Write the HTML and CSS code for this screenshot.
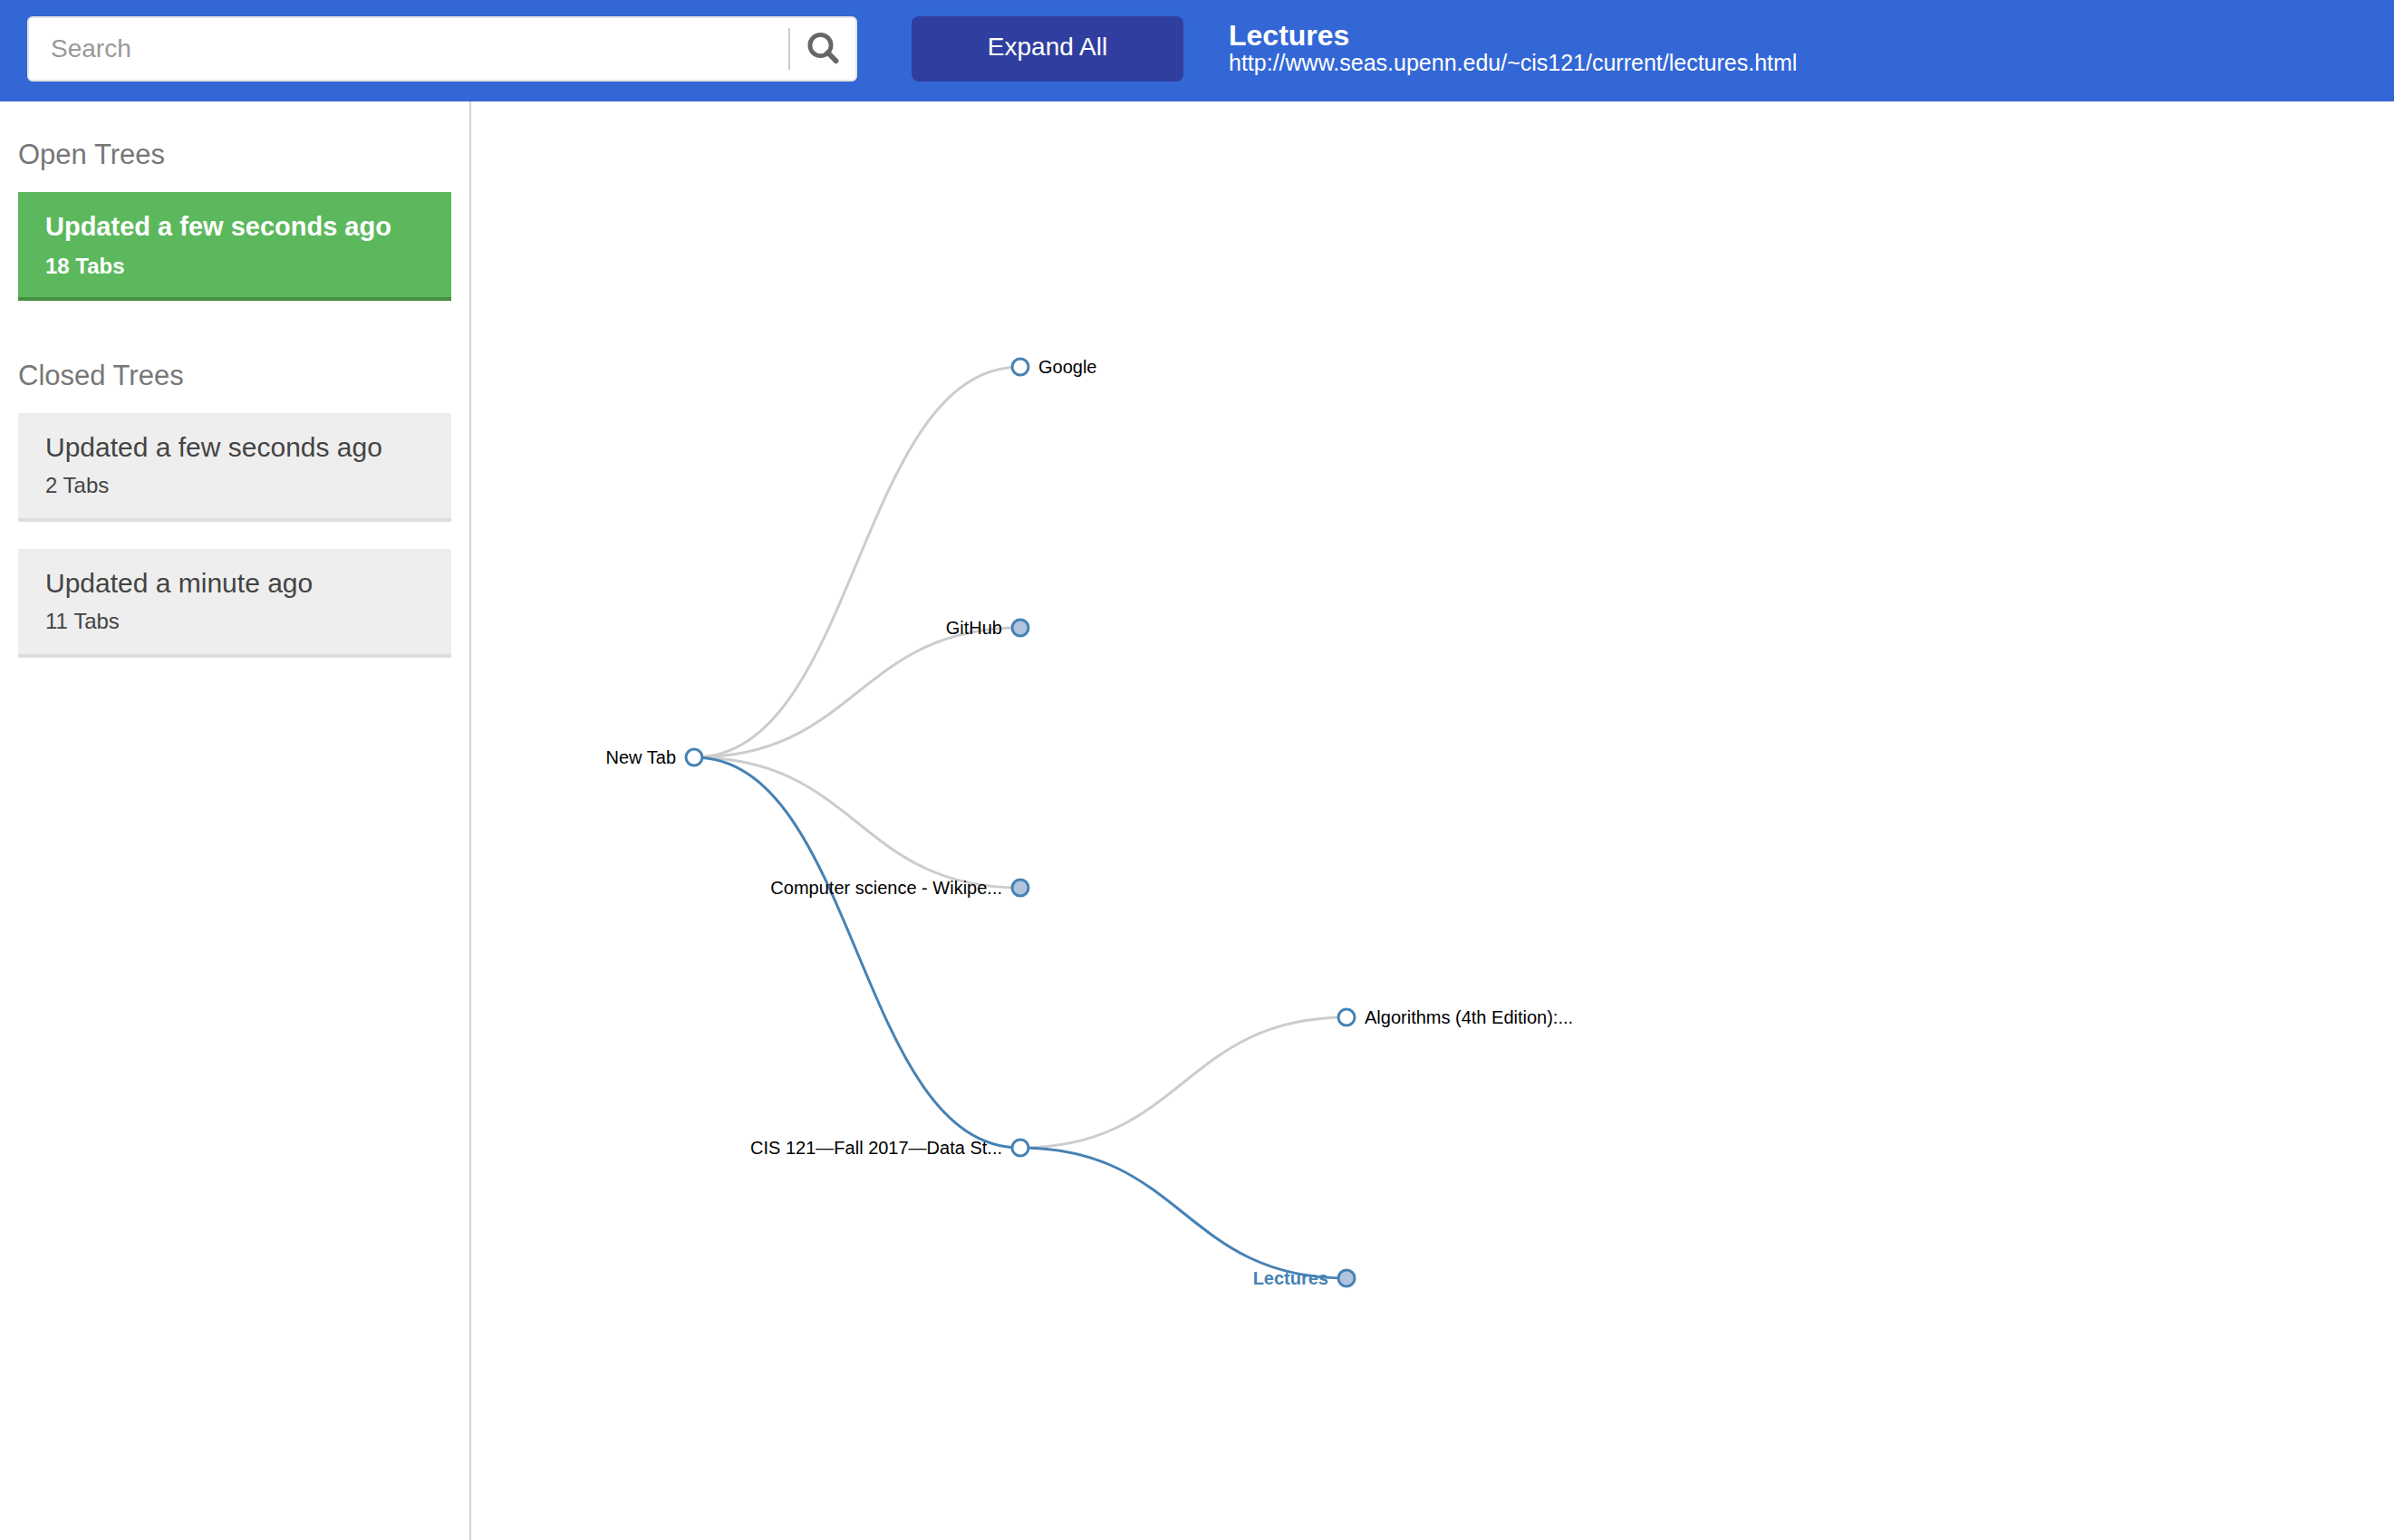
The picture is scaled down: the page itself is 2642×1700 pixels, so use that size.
FILE: index.html
```html
<!DOCTYPE html>
<html lang="en">
<head>
  <meta charset="utf-8">
  <title>Tab Trees</title>
  <link rel="stylesheet" href="styles.css">
</head>
<body>
  <header class="topbar">
    <form class="search" role="search">
      <input class="search-input" type="text" placeholder="Search" aria-label="Search">
      <button class="search-button" type="button" aria-label="Search">
        <svg class="search-icon" viewBox="0 0 36 36" aria-hidden="true">
          <circle cx="15.5" cy="14" r="11.6"/>
          <path d="M23.5 22 L32.6 31.2"/>
        </svg>
      </button>
    </form>
    <button class="expand" type="button">Expand All</button>
    <div class="page-info">
      <h1 class="page-title">Lectures</h1>
      <a class="page-url" href="http://www.seas.upenn.edu/~cis121/current/lectures.html">http://www.seas.upenn.edu/~cis121/current/lectures.html</a>
    </div>
  </header>
  <div class="workspace">
    <aside class="sidebar">
      <section class="group">
        <h2 class="group-title">Open Trees</h2>
        <a class="tree tree-open" href="#open-1">
          <span class="tree-name">Updated a few seconds ago</span>
          <span class="tree-count">18 Tabs</span>
        </a>
      </section>
      <section class="group">
        <h2 class="group-title">Closed Trees</h2>
        <a class="tree" href="#closed-1">
          <span class="tree-name">Updated a few seconds ago</span>
          <span class="tree-count">2 Tabs</span>
        </a>
        <a class="tree" href="#closed-2">
          <span class="tree-name">Updated a minute ago</span>
          <span class="tree-count">11 Tabs</span>
        </a>
      </section>
    </aside>
    <main class="canvas">
      <svg class="graph" role="img" aria-label="Tab tree">
        <g class="links">
          <path d="M246,724C426,724 426,293 606,293"/>
          <path d="M246,724C426,724 426,581 606,581"/>
          <path d="M246,724C426,724 426,868 606,868"/>
          <path d="M606,1155C786,1155 786,1011 966,1011"/>
          <path class="active" d="M246,724C426,724 426,1155 606,1155"/>
          <path class="active" d="M606,1155C786,1155 786,1299 966,1299"/>
        </g>
        <g class="node" transform="translate(246,724)"><circle r="9"/><text class="before" x="-20" y="7">New Tab</text></g>
        <g class="node" transform="translate(606,293)"><circle r="9"/><text x="20" y="7">Google</text></g>
        <g class="node folded" transform="translate(606,581)"><circle r="9"/><text class="before" x="-20" y="7">GitHub</text></g>
        <g class="node folded" transform="translate(606,868)"><circle r="9"/><text class="before" x="-20" y="7">Computer science - Wikipe...</text></g>
        <g class="node" transform="translate(606,1155)"><circle r="9"/><text class="before" x="-20" y="7">CIS 121—Fall 2017—Data St...</text></g>
        <g class="node" transform="translate(966,1011)"><circle r="9"/><text x="20" y="7">Algorithms (4th Edition):...</text></g>
        <g class="node folded current" transform="translate(966,1299)"><circle r="9"/><text class="before" x="-20" y="7">Lectures</text></g>
      </svg>
    </main>
  </div>
</body>
</html>
```

FILE: styles.css
```css
* {
  box-sizing: border-box;
}

body {
  margin: 0;
  min-height: 100vh;
  display: flex;
  flex-direction: column;
  background: #fff;
  font-family: "Liberation Sans", Arial, sans-serif;
}

h1,
h2 {
  margin: 0;
}

a {
  text-decoration: none;
}

button,
input {
  font-family: inherit;
  font-size: 28px;
}

.topbar {
  display: flex;
  align-items: flex-start;
  padding: 18px 30px 22px;
  background: #3367d6;
}

.search {
  display: flex;
  align-items: center;
  flex: 0 1 916px;
  height: 72px;
  margin-right: 60px;
  background: #fff;
  border: 2px solid #e5e5e5;
  border-radius: 6px;
}

.search-input {
  flex: 1;
  min-width: 0;
  height: 46px;
  padding: 0 24px;
  border: 0;
  border-right: 2px solid #ccc;
  background: transparent;
  color: #444;
  outline: none;
}

.search-input::placeholder {
  color: #999;
  opacity: 1;
}

.search-button {
  display: flex;
  justify-content: center;
  align-items: center;
  width: 72px;
  height: 68px;
  padding: 0;
  border: 0;
  background: transparent;
}

.search-icon {
  width: 36px;
  height: 36px;
  fill: none;
  stroke: #666;
  stroke-width: 4.8;
}

.search-icon path {
  stroke-width: 5.6;
  stroke-linecap: round;
}

.expand {
  flex: 0 0 300px;
  height: 72px;
  margin-right: 50px;
  padding: 0 0 4px;
  border: 0;
  border-radius: 8px;
  background: #303f9f;
  color: #fff;
}

.page-info {
  display: flex;
  flex-direction: column;
  padding-top: 5px;
  color: #fff;
}

.page-title {
  font-size: 32px;
  line-height: 32px;
}

.page-url {
  font-size: 25px;
  line-height: 28px;
  color: #fff;
}

.workspace {
  flex: 1;
  display: flex;
}

.sidebar {
  flex: 0 0 520px;
  display: flex;
  flex-direction: column;
  gap: 63px;
  padding: 39px 20px 0;
  border-right: 2px solid #d0d0d0;
}

.group {
  display: flex;
  flex-direction: column;
}

.group-title {
  margin-bottom: 21px;
  font-size: 31px;
  line-height: 40px;
  font-weight: normal;
  color: #777;
}

.tree {
  display: flex;
  flex-direction: column;
  gap: 10px;
  min-height: 120px;
  padding: 20px 30px;
  border-bottom: 4px solid #ddd;
  background: #eee;
  color: #444;
}

.tree + .tree {
  margin-top: 30px;
}

.tree-name {
  font-size: 30px;
  line-height: 36px;
}

.tree-count {
  font-size: 24px;
  line-height: 28px;
}

.tree-open {
  gap: 12px;
  border-bottom-color: #449044;
  background: #5cb85c;
  color: #fff;
  font-weight: bold;
}

.tree-open .tree-name {
  font-size: 29px;
}

.canvas {
  flex: 1;
  display: flex;
  min-width: 0;
}

.graph {
  flex: 1;
  min-height: 1400px;
}

.links path {
  fill: none;
  stroke: #ccc;
  stroke-width: 3px;
}

.links .active {
  stroke: #4682b4;
}

.node circle {
  fill: #fff;
  stroke: #4682b4;
  stroke-width: 3px;
}

.node text {
  font-size: 20px;
  fill: #000;
}

.node .before {
  text-anchor: end;
}

.folded circle {
  fill: #b0c4de;
}

.current text {
  font-weight: bold;
  fill: #4682b4;
}
```
